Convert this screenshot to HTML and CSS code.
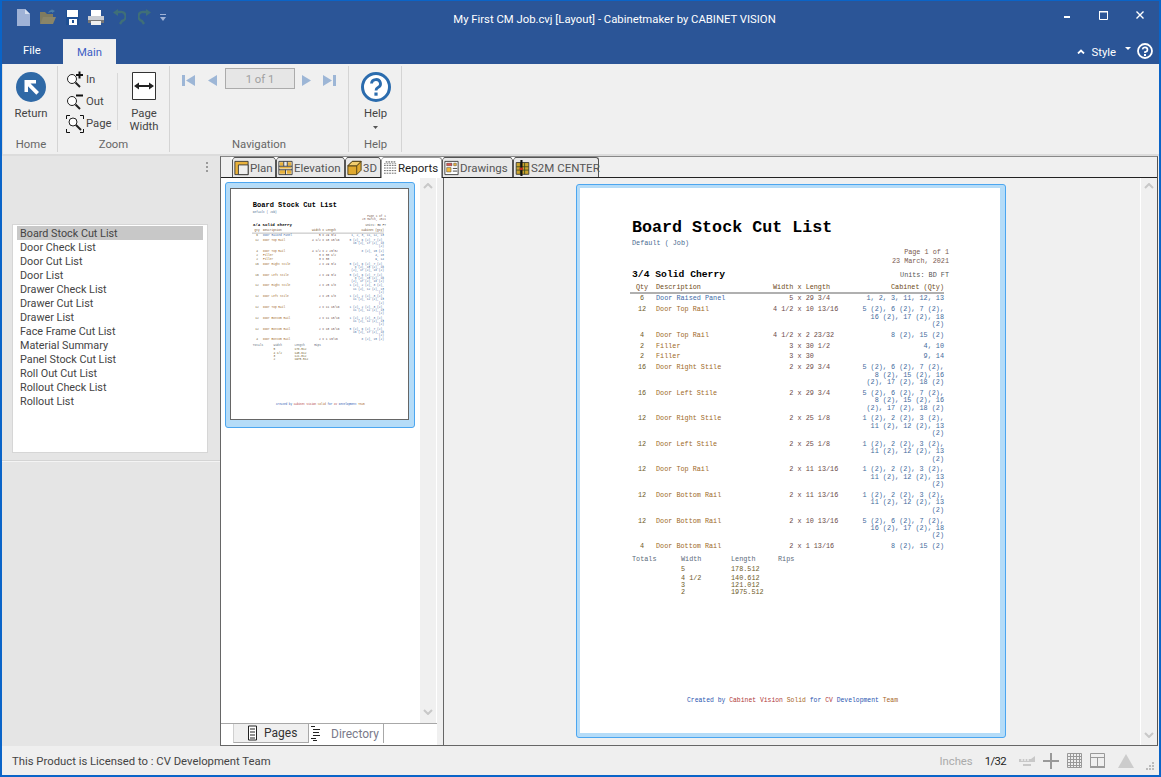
FILE: index.html
```html
<!DOCTYPE html>
<html lang="en">
<head>
<meta charset="utf-8">
<title>My First CM Job.cvj [Layout] - Cabinetmaker by CABINET VISION</title>
<link rel="stylesheet" href="styles.css">
</head>
<body>
<div class="window">
  <header class="titlebar">
    <div class="qat">
      <svg class="qi" width="13" height="17" viewBox="0 0 13 17"><path d="M0 0h8l5 5v12H0z" fill="#9fb2d6"/><path d="M8 0v5h5z" fill="#d5deee"/></svg>
      <svg class="qi" width="16" height="16" viewBox="0 0 16 16"><path d="M0 3h5l2 2h6v3H4l-4 7z" fill="#7f7b5f"/><path d="M3 8h13l-3 7H0z" fill="#8a8568"/><path d="M8 4c1-2 2-3 4-3l-1-1 4 2-3 2V3c-1 0-2 0-4 1z" fill="#4c7fa8"/></svg>
      <svg class="qi" width="13" height="15" viewBox="0 0 13 15"><path d="M0 0h13v15H0z" fill="#1e4f92"/><path d="M1 0h11v7H1z" fill="#fff"/><path d="M3 9h8v6H3z" fill="#fff"/><path d="M6 10h2v3H6z" fill="#1e4f92"/></svg>
      <svg class="qi" width="16" height="15" viewBox="0 0 16 15"><path d="M3 0h10v6H3z" fill="#fff"/><path d="M0 6h16v7H0z" fill="#c9ccd2"/><path d="M0 10h16v3H0z" fill="#777"/><path d="M3 11h10v4H3z" fill="#eee"/></svg>
      <svg class="qi" width="13" height="16" viewBox="0 0 13 16"><path d="M4 3h3a4.500 4.500 0 0 1 2 9l-2 3" fill="none" stroke="#3f6f78" stroke-width="2.400"/><path d="M5 0v7L0 3.500z" fill="#3f6f78"/></svg>
      <svg class="qi" width="13" height="16" viewBox="0 0 13 16"><path d="M9 3H6a4.500 4.500 0 0 0-2 9l2 3" fill="none" stroke="#3f6f78" stroke-width="2.400"/><path d="M8 0v7l5-3.500z" fill="#3f6f78"/></svg>
      <svg class="qi" width="6" height="7" viewBox="0 0 6 7"><path d="M0 0h6v1H0zM0 3h6L3 7z" fill="#9fb2d6"/></svg>
    </div>
    <h1 class="wintitle">My First CM Job.cvj [Layout] - Cabinetmaker by CABINET VISION</h1>
    <div class="winctl">
      <svg width="6" height="2" viewBox="0 0 6 2"><path d="M0 0h6v2H0z" fill="#fff"/></svg>
      <svg width="9" height="9" viewBox="0 0 9 9"><path d="M.5.500h8v8h-8z" fill="none" stroke="#fff"/><path d="M0 0h9v1.500H0z" fill="#fff"/></svg>
      <svg width="8" height="8" viewBox="0 0 8 8"><path d="M.5.500l7 7M7.500.500l-7 7" stroke="#fff" stroke-width="1.400"/></svg>
    </div>
  </header>

  <nav class="menubar">
    <span class="menu-file">File</span>
    <span class="menu-main">Main</span>
    <div class="style-area">
      <svg width="8" height="5" viewBox="0 0 8 5"><path d="M1 4.500L4 1.500l3 3" fill="none" stroke="#fff" stroke-width="1.800"/></svg>
      <span class="style-label">Style</span>
      <svg class="style-drop" width="6" height="3" viewBox="0 0 6 3"><path d="M0 0h6L3 3z" fill="#fff"/></svg>
      <svg width="16" height="16" viewBox="0 0 16 16"><circle cx="8" cy="8" r="7" fill="#2b5597" stroke="#fff" stroke-width="1.800"/><path d="M5.500 6.300A2.500 2.300 0 1 1 8 9v1" fill="none" stroke="#fff" stroke-width="1.700"/><path d="M7 11h2v2H7z" fill="#fff"/></svg>
    </div>
  </nav>

  <section class="ribbon">
    <div class="rgroup g-home">
      <div class="rbody">
        <button class="bigbtn">
          <svg width="30" height="30" viewBox="0 0 30 30"><circle cx="15" cy="15" r="15" fill="#2f69a6"/><path d="M9 8h11v3.500h-5.500L23 20l-2.700 2.700-8.300-8.400V20H8.500V8z" fill="#fff"/></svg>
          <span>Return</span>
        </button>
      </div>
      <div class="rlabel">Home</div>
    </div>
    <div class="rgroup g-zoom">
      <div class="rbody zoombody">
        <div class="zoomcol">
          <div class="smallbtn">
            <svg width="18" height="18" viewBox="0 0 18 18"><circle cx="6" cy="8" r="4.500" fill="#fff" stroke="#222"/><path d="M9.500 11.500l4.500 4.500" stroke="#222" stroke-width="2"/><path d="M10 4h7M13.500 .5v7" stroke="#111" stroke-width="2"/></svg>
            <span>In</span>
          </div>
          <div class="smallbtn">
            <svg width="18" height="18" viewBox="0 0 18 18"><circle cx="6" cy="8" r="4.500" fill="#fff" stroke="#222"/><path d="M9.500 11.500l4.500 4.500" stroke="#222" stroke-width="2"/><path d="M10 2.500h7" stroke="#111" stroke-width="2"/></svg>
            <span>Out</span>
          </div>
          <div class="smallbtn">
            <svg width="18" height="18" viewBox="0 0 18 18"><path d="M.5 4V.5H4M14 .5h3.500V4M17.500 14v3.500H14M4 17.500H.5V14" fill="none" stroke="#111"/><circle cx="7" cy="7" r="4" fill="#fff" stroke="#222"/><path d="M10 10l5 5" stroke="#222" stroke-width="2"/></svg>
            <span>Page</span>
          </div>
        </div>
        <div class="zoomsep"></div>
        <button class="pagewidth">
          <svg width="24" height="28" viewBox="0 0 24 28"><path d="M.5.500h23v27H.5z" fill="#fff" stroke="#333"/><path d="M5 14h14" stroke="#222" stroke-width="2"/><path d="M2 14l5-3.500v7zM22 14l-5-3.500v7z" fill="#222"/></svg>
          <span>Page<br>Width</span>
        </button>
      </div>
      <div class="rlabel">Zoom</div>
    </div>
    <div class="rgroup g-nav">
      <div class="rbody navbody">
        <svg width="13" height="11" viewBox="0 0 13 11"><path d="M0 0h3v11H0zM13 0v11L4 5.500z" fill="#9db6d6"/></svg>
        <svg class="nav-prev" width="9" height="11" viewBox="0 0 9 11"><path d="M9 0v11L0 5.500z" fill="#9db6d6"/></svg>
        <div class="pagebox">1 of 1</div>
        <svg class="nav-next" width="9" height="11" viewBox="0 0 9 11"><path d="M0 0v11l9-5.500z" fill="#9db6d6"/></svg>
        <svg class="nav-last" width="13" height="11" viewBox="0 0 13 11"><path d="M10 0h3v11h-3zM0 0v11l9-5.500z" fill="#9db6d6"/></svg>
      </div>
      <div class="rlabel">Navigation</div>
    </div>
    <div class="rgroup g-help">
      <div class="rbody">
        <button class="bigbtn">
          <svg width="30" height="30" viewBox="0 0 30 30"><circle cx="15" cy="15" r="13.500" fill="#fff" stroke="#2b6cae" stroke-width="3"/><path d="M10.500 11.500a4.500 4.200 0 1 1 6.500 4c-1.400.8-2 1.500-2 3" fill="none" stroke="#2b6cae" stroke-width="2.800"/><path d="M13.400 20.500h3.200v3.200h-3.200z" fill="#2b6cae"/></svg>
          <span>Help</span>
          <svg class="help-drop" width="5" height="3" viewBox="0 0 5 3"><path d="M0 0h5L2.500 3z" fill="#555"/></svg>
        </button>
      </div>
      <div class="rlabel">Help</div>
    </div>
  </section>

  <main class="workspace">
    <aside class="sidepanel">
      <div class="grip"><i></i><i></i><i></i></div>
      <ul class="reportlist">
        <li class="selected">Board Stock Cut List</li>
        <li>Door Check List</li>
        <li>Door Cut List</li>
        <li>Door List</li>
        <li>Drawer Check List</li>
        <li>Drawer Cut List</li>
        <li>Drawer List</li>
        <li>Face Frame Cut List</li>
        <li>Material Summary</li>
        <li>Panel Stock Cut List</li>
        <li>Roll Out Cut List</li>
        <li>Rollout Check List</li>
        <li>Rollout List</li>
      </ul>
      <div class="sidesep"></div>
    </aside>

    <div class="frame">
      <div class="tabs">
        <div class="tab t-plan"><svg width="17" height="17" viewBox="0 0 17 17"><path d="M1 1h15v15H1z" fill="#e9b23c" stroke="#333"/><path d="M5 5h11v11H5z" fill="#efefef" stroke="#333"/></svg>Plan</div>
        <div class="tab t-elev"><svg width="17" height="17" viewBox="0 0 17 17"><path d="M1 1h15v15H1z" fill="#efefef" stroke="#333"/><path d="M2 2h4v4H2zM11 2h4v4h-4zM2 7h13v2H2zM2 11h6v4H2zM10 11h5v4h-5z" fill="#e9b23c"/><path d="M1 6.500h15M1 10.500h15M8.500 10.500V16M6.500 1v5.500M10.500 1v5.500" stroke="#333" fill="none"/></svg>Elevation</div>
        <div class="tab t-3d"><svg width="17" height="17" viewBox="0 0 17 17"><path d="M1 6l5-5h10v10l-5 5H1z" fill="#e0a92f" stroke="#4a3b14"/><path d="M1 6h10v10M11 6l5-5" fill="none" stroke="#4a3b14"/><path d="M6 1h10l-5 5H1z" fill="#f2cd6e" stroke="#4a3b14"/></svg>3D</div>
        <div class="tab t-reports active"><svg width="15" height="17" viewBox="0 0 15 17"><path d="M2 1.500h11" stroke="#333" stroke-dasharray="2 1"/><path d="M0 5.500h15M0 8.500h15M0 11.500h15M0 14.500h15" stroke="#555" stroke-dasharray="2 1"/><path d="M0 3.500h15" stroke="#888" stroke-dasharray="2 1"/></svg>Reports</div>
        <div class="tab t-draw"><svg width="17" height="17" viewBox="0 0 17 17"><path d="M1 1h15v15H1z" fill="#fff" stroke="#333"/><path d="M3 3h6v3H3z" fill="#d9534f" stroke="#333" stroke-width=".5"/><path d="M11 3h3v3h-3z" fill="#f2b93b" stroke="#333" stroke-width=".5"/><path d="M3 8h5v5H3z" fill="#f2b93b" stroke="#333" stroke-width=".5"/><path d="M10 9h5M10 12h5" stroke="#333"/></svg>Drawings</div>
        <div class="tab t-s2m"><svg width="17" height="19" viewBox="0 0 17 19"><path d="M1 3h15v14H1z" fill="#c9a32e" stroke="#333"/><path d="M6 3v14M11 3v14M1 8h15M1 12h15" stroke="#3a4a20"/><path d="M6 0h2.500v19H6z" fill="#111"/><path d="M5 9h4v3H5z" fill="#c03020"/></svg>S2M CENTER</div>
      </div>

      <div class="panes">
        <div class="thumbpane">
          <div class="thumbarea">
            <div class="thumbscroll">
              <div class="thumbframe">
                <div class="thumbpage">
                  <article class="report">
                    <h2 class="rp-title">Board Stock Cut List</h2>
                    <div class="rp-sub">Default ( Job)</div>
                    <div class="rp-right">Page 1 of 1</div>
                    <div class="rp-right">23 March, 2021</div>
                    <div class="rp-mat"><b>3/4 Solid Cherry</b><span>Units: BD FT</span></div>
                    <div class="rp-row rp-head"><span class="q">Qty</span><span class="d">Description</span><span class="w">Width x Length</span><span class="c">Cabinet (Qty)</span></div>
                    <div class="rp-rule"></div>
                    <div class="rp-row"><span class="q">6</span><span class="d first">Door Raised Panel</span><span class="w">    5 x 29 3/4</span><span class="c">1, 2, 3, 11, 12, 13</span></div>
                    <div class="rp-row"><span class="q">12</span><span class="d">Door Top Rail</span><span class="w">4 1/2 x 10 13/16</span><span class="c">5 (2), 6 (2), 7 (2),<br>16 (2), 17 (2), 18<br>(2)</span></div>
                    <div class="rp-row"><span class="q">4</span><span class="d">Door Top Rail</span><span class="w">4 1/2 x 2 23/32</span><span class="c">8 (2), 15 (2)</span></div>
                    <div class="rp-row"><span class="q">2</span><span class="d">Filler</span><span class="w">    3 x 30 1/2</span><span class="c">4, 10</span></div>
                    <div class="rp-row"><span class="q">2</span><span class="d">Filler</span><span class="w">    3 x 30</span><span class="c">9, 14</span></div>
                    <div class="rp-row"><span class="q">16</span><span class="d">Door Right Stile</span><span class="w">    2 x 29 3/4</span><span class="c">5 (2), 6 (2), 7 (2),<br>8 (2), 15 (2), 16<br>(2), 17 (2), 18 (2)</span></div>
                    <div class="rp-row"><span class="q">16</span><span class="d">Door Left Stile</span><span class="w">    2 x 29 3/4</span><span class="c">5 (2), 6 (2), 7 (2),<br>8 (2), 15 (2), 16<br>(2), 17 (2), 18 (2)</span></div>
                    <div class="rp-row"><span class="q">12</span><span class="d">Door Right Stile</span><span class="w">    2 x 25 1/8</span><span class="c">1 (2), 2 (2), 3 (2),<br>11 (2), 12 (2), 13<br>(2)</span></div>
                    <div class="rp-row"><span class="q">12</span><span class="d">Door Left Stile</span><span class="w">    2 x 25 1/8</span><span class="c">1 (2), 2 (2), 3 (2),<br>11 (2), 12 (2), 13<br>(2)</span></div>
                    <div class="rp-row"><span class="q">12</span><span class="d">Door Top Rail</span><span class="w">    2 x 11 13/16</span><span class="c">1 (2), 2 (2), 3 (2),<br>11 (2), 12 (2), 13<br>(2)</span></div>
                    <div class="rp-row"><span class="q">12</span><span class="d">Door Bottom Rail</span><span class="w">    2 x 11 13/16</span><span class="c">1 (2), 2 (2), 3 (2),<br>11 (2), 12 (2), 13<br>(2)</span></div>
                    <div class="rp-row"><span class="q">12</span><span class="d">Door Bottom Rail</span><span class="w">    2 x 10 13/16</span><span class="c">5 (2), 6 (2), 7 (2),<br>16 (2), 17 (2), 18<br>(2)</span></div>
                    <div class="rp-row"><span class="q">4</span><span class="d">Door Bottom Rail</span><span class="w">    2 x 1 13/16</span><span class="c">8 (2), 15 (2)</span></div>
                    <div class="rp-totals rp-totalhead"><span>Totals</span><span>Width</span><span>Length</span><span>Rips</span></div>
                    <div class="rp-totals tfirst"><span></span><span>5</span><span>178.512</span></div>
                    <div class="rp-totals tgap"><span></span><span>4 1/2</span><span>140.612</span></div>
                    <div class="rp-totals"><span></span><span>3</span><span>121.012</span></div>
                    <div class="rp-totals"><span></span><span>2</span><span>1975.512</span></div>
                    <div class="rp-foot"><span class="fb">Created by</span> <span class="fr">Cabinet Vision</span> <span class="fo">Solid</span> <span class="fb">for</span> <span class="fr">CV</span> <span class="fb">Development</span> <span class="fo">Team</span></div>
                  </article>
                </div>
              </div>
            </div>
            <div class="vscroll thumbbar">
              <svg width="10" height="6" viewBox="0 0 10 6"><path d="M1 5l4-4 4 4" fill="none" stroke="#c8c8c8" stroke-width="2"/></svg>
              <svg width="10" height="6" viewBox="0 0 10 6"><path d="M1 1l4 4 4-4" fill="none" stroke="#c8c8c8" stroke-width="2"/></svg>
            </div>
            <div class="thumbstrip"></div>
          </div>
          <div class="pagetabs">
            <div class="ptab ptab-on"><svg width="9" height="17" viewBox="0 0 9 17"><path d="M.5 1h8v14h-8z" fill="#fff" stroke="#222"/><path d="M2 4h5M2 7h5M2 10h5M2 13h5" stroke="#222"/></svg>Pages</div>
            <div class="ptab ptab-off"><svg width="9" height="17" viewBox="0 0 9 17"><path d="M0 1.500h4M2 4.500h7M2 7.500h6M2 10.500h7M0 13.500h5M2 15.500h4" stroke="#222"/></svg>Directory</div>
          </div>
        </div>

        <div class="viewpane">
          <div class="viewarea">
            <div class="pageframe">
              <article class="report">
                <h2 class="rp-title">Board Stock Cut List</h2>
                <div class="rp-sub">Default ( Job)</div>
                <div class="rp-right">Page 1 of 1</div>
                <div class="rp-right">23 March, 2021</div>
                <div class="rp-mat"><b>3/4 Solid Cherry</b><span>Units: BD FT</span></div>
                <div class="rp-row rp-head"><span class="q">Qty</span><span class="d">Description</span><span class="w">Width x Length</span><span class="c">Cabinet (Qty)</span></div>
                <div class="rp-rule"></div>
                <div class="rp-row"><span class="q">6</span><span class="d first">Door Raised Panel</span><span class="w">    5 x 29 3/4</span><span class="c">1, 2, 3, 11, 12, 13</span></div>
                <div class="rp-row"><span class="q">12</span><span class="d">Door Top Rail</span><span class="w">4 1/2 x 10 13/16</span><span class="c">5 (2), 6 (2), 7 (2),<br>16 (2), 17 (2), 18<br>(2)</span></div>
                <div class="rp-row"><span class="q">4</span><span class="d">Door Top Rail</span><span class="w">4 1/2 x 2 23/32</span><span class="c">8 (2), 15 (2)</span></div>
                <div class="rp-row"><span class="q">2</span><span class="d">Filler</span><span class="w">    3 x 30 1/2</span><span class="c">4, 10</span></div>
                <div class="rp-row"><span class="q">2</span><span class="d">Filler</span><span class="w">    3 x 30</span><span class="c">9, 14</span></div>
                <div class="rp-row"><span class="q">16</span><span class="d">Door Right Stile</span><span class="w">    2 x 29 3/4</span><span class="c">5 (2), 6 (2), 7 (2),<br>8 (2), 15 (2), 16<br>(2), 17 (2), 18 (2)</span></div>
                <div class="rp-row"><span class="q">16</span><span class="d">Door Left Stile</span><span class="w">    2 x 29 3/4</span><span class="c">5 (2), 6 (2), 7 (2),<br>8 (2), 15 (2), 16<br>(2), 17 (2), 18 (2)</span></div>
                <div class="rp-row"><span class="q">12</span><span class="d">Door Right Stile</span><span class="w">    2 x 25 1/8</span><span class="c">1 (2), 2 (2), 3 (2),<br>11 (2), 12 (2), 13<br>(2)</span></div>
                <div class="rp-row"><span class="q">12</span><span class="d">Door Left Stile</span><span class="w">    2 x 25 1/8</span><span class="c">1 (2), 2 (2), 3 (2),<br>11 (2), 12 (2), 13<br>(2)</span></div>
                <div class="rp-row"><span class="q">12</span><span class="d">Door Top Rail</span><span class="w">    2 x 11 13/16</span><span class="c">1 (2), 2 (2), 3 (2),<br>11 (2), 12 (2), 13<br>(2)</span></div>
                <div class="rp-row"><span class="q">12</span><span class="d">Door Bottom Rail</span><span class="w">    2 x 11 13/16</span><span class="c">1 (2), 2 (2), 3 (2),<br>11 (2), 12 (2), 13<br>(2)</span></div>
                <div class="rp-row"><span class="q">12</span><span class="d">Door Bottom Rail</span><span class="w">    2 x 10 13/16</span><span class="c">5 (2), 6 (2), 7 (2),<br>16 (2), 17 (2), 18<br>(2)</span></div>
                <div class="rp-row"><span class="q">4</span><span class="d">Door Bottom Rail</span><span class="w">    2 x 1 13/16</span><span class="c">8 (2), 15 (2)</span></div>
                <div class="rp-totals rp-totalhead"><span>Totals</span><span>Width</span><span>Length</span><span>Rips</span></div>
                <div class="rp-totals tfirst"><span></span><span>5</span><span>178.512</span></div>
                <div class="rp-totals tgap"><span></span><span>4 1/2</span><span>140.612</span></div>
                <div class="rp-totals"><span></span><span>3</span><span>121.012</span></div>
                <div class="rp-totals"><span></span><span>2</span><span>1975.512</span></div>
                <div class="rp-foot"><span class="fb">Created by</span> <span class="fr">Cabinet Vision</span> <span class="fo">Solid</span> <span class="fb">for</span> <span class="fr">CV</span> <span class="fb">Development</span> <span class="fo">Team</span></div>
              </article>
            </div>
          </div>
          <div class="vscroll viewbar">
            <svg width="10" height="6" viewBox="0 0 10 6"><path d="M1 5l4-4 4 4" fill="none" stroke="#c8c8c8" stroke-width="2"/></svg>
            <svg width="10" height="6" viewBox="0 0 10 6"><path d="M1 1l4 4 4-4" fill="none" stroke="#c8c8c8" stroke-width="2"/></svg>
          </div>
        </div>
      </div>
    </div>
  </main>

  <footer class="statusbar">
    <span class="license">This Product is Licensed to : CV Development Team</span>
    <span class="units">Inches</span>
    <span class="fraction">1/32</span>
    <svg class="st-ruler" width="16" height="10" viewBox="0 0 16 10"><path d="M0 3h12l4-3v6H0zM4 8h8v2H4z" fill="#c8c8c8"/><path d="M3 3v2M6 3v2M9 3v2" stroke="#fff"/></svg>
    <svg width="16" height="16" viewBox="0 0 16 16"><path d="M0 7h16v2H0zM7 0h2v16H7z" fill="#999"/></svg>
    <svg width="15" height="15" viewBox="0 0 15 15"><path d="M.5.500h14v14H.5zM3.500.500v14M6.500.500v14M9.500.500v14M12.500.500v14M.5 3.500h14M.5 6.500h14M.5 9.500h14M.5 12.500h14" fill="none" stroke="#999"/></svg>
    <svg width="15" height="15" viewBox="0 0 15 15"><path d="M.5.500h14v14H.5zM.5 4.500h14M7.500 4.500v10" fill="none" stroke="#999"/><path d="M0 13h15v2H0z" fill="#999"/></svg>
    <svg class="st-tri" width="16" height="14" viewBox="0 0 16 14"><path d="M8 0l8 14H0z" fill="#ccc"/></svg>
    <svg class="st-grip" width="8" height="8" viewBox="0 0 8 8"><path d="M6 0h2v2H6zM3 3h2v2H3zM6 3h2v2H6zM0 6h2v2H0zM3 6h2v2H3zM6 6h2v2H6z" fill="#bbb"/></svg>
  </footer>
</div>
</body>
</html>
```

FILE: styles.css
```css
* { box-sizing: border-box; }
html, body { margin: 0; padding: 0; }
body {
  width: 1161px;
  height: 777px;
  overflow: hidden;
  font-family: Roboto, "Noto Sans", sans-serif;
  font-size: 11.300px;
  color: #444;
  background: #f0f0f0;
}
button { font: inherit; color: inherit; background: none; border: 0; padding: 0; }
svg { display: block; flex: none; }

.window {
  height: 777px;
  display: flex;
  flex-direction: column;
  border-top: 1px solid #0a64c8;
  border-left: 2px solid #0a64c8;
  border-right: 2px solid #0a64c8;
  border-bottom: 2px solid #0a64c8;
}

/* Title bar */
.titlebar {
  height: 37px;
  flex: none;
  background: #2b5597;
  display: flex;
  align-items: flex-start;
  position: relative;
  padding: 7px 0 0 15px;
}
.qat { display: flex; align-items: center; gap: 10px; height: 18px; }
.qat .qi:nth-child(4),
.qat .qi:nth-child(5),
.qat .qi:nth-child(7) { margin-left: -1px; }
.qat .qi:nth-child(6) { margin-left: 2px; }
.wintitle {
  position: absolute;
  left: 68px;
  right: 0;
  top: 11px;
  margin: 0;
  text-align: center;
  font-size: 11.300px;
  line-height: 16px;
  font-weight: 400;
  color: #fff;
}
.winctl {
  margin-left: auto;
  display: flex;
  align-items: center;
  height: 14px;
  gap: 28px;
  padding-right: 15px;
}
.winctl svg:first-child { margin: 4px 1px 0 0; }

/* Tabs row */
.menubar {
  height: 26px;
  flex: none;
  background: #2b5597;
  display: flex;
  align-items: flex-end;
  padding-left: 21px;
  color: #fff;
}
.menu-file { width: 40px; line-height: 26px; }
.menu-main {
  width: 53px;
  height: 25px;
  line-height: 26px;
  text-align: center;
  background: #f0f0f0;
  color: #3d5fc4;
  border-top: 1px solid #e4e8ee;
}
.style-area {
  margin-left: auto;
  padding-right: 6px;
  display: flex;
  align-items: center;
  height: 26px;
}
.style-label { margin: 0 9px 0 7px; padding-top: 2px; color: #fff; }
.style-drop { margin: -6px 6px 0 0; }

/* Ribbon */
.ribbon {
  height: 92px;
  flex: none;
  display: flex;
  background: #f0f0f0;
  border-bottom: 2px solid #dcdcdc;
  border-left: 1px solid #dcdcdc;
  padding-top: 2px;
}
.rgroup {
  display: flex;
  flex-direction: column;
  border-right: 1px solid #d4d4d4;
  height: 86px;
}
.rbody { flex: 1; min-height: 0; }
.rlabel { height: 17px; line-height: 19px; text-align: center; color: #666; }
.g-home { width: 55px; padding-left: 2px; }
.g-zoom { width: 112px; }
.g-nav { width: 179px; }
.g-help { width: 53px; padding-left: 1px; }
.bigbtn {
  width: 100%;
  display: flex;
  flex-direction: column;
  align-items: center;
  line-height: 16px;
  padding-top: 6px;
  color: #444;
}
.bigbtn span { margin-top: 4px; }
.help-drop { margin-top: 4px; }

.zoombody { display: flex; padding: 5px 0 0 8px; }
.zoomcol { width: 50px; display: flex; flex-direction: column; gap: 4px; }
.smallbtn { display: flex; align-items: center; gap: 2px; height: 18px; line-height: 14px; }
.smallbtn span { margin-top: -1px; }
.zoomsep { width: 1px; height: 57px; margin: 2px 0 0 1px; background: #d8d8d8; }
.pagewidth {
  margin-left: 13px;
  width: 26px;
  display: flex;
  flex-direction: column;
  align-items: center;
  line-height: 13px;
  padding-top: 1px;
  overflow: visible;
}
.pagewidth span { margin-top: 7px; }

.navbody { display: flex; align-items: flex-start; padding: 2px 0 0 12px; }
.navbody > svg { margin-top: 7px; }
.nav-prev { margin-left: 13px; }
.pagebox {
  width: 70px;
  height: 21px;
  margin-left: 8px;
  line-height: 21px;
  text-align: center;
  background: #e6e6e6;
  border: 1px solid #ababab;
  color: #a0a0a0;
}
.nav-next { margin-left: 7px; }
.nav-last { margin-left: 12px; }

/* Workspace */
.workspace { flex: 1; min-height: 0; display: flex; background: #f0f0f0; }
.sidepanel {
  width: 218px;
  flex: none;
  background: #e5e5e5;
  padding: 68px 0 0 10px;
  position: relative;
}
.grip { position: absolute; left: 204px; top: 6px; display: flex; flex-direction: column; gap: 2px; }
.grip i { display: block; width: 2px; height: 2px; background: #9a9a9a; }
.reportlist {
  list-style: none;
  margin: 0;
  padding: 1px 4px;
  width: 196px;
  height: 229px;
  background: #fff;
  border: 1px solid #d6d6d6;
  color: #444;
  font-size: 10.800px;
}
.reportlist li { height: 14px; line-height: 16px; padding-left: 3px; white-space: nowrap; }
.reportlist .selected { background: #c8c8c8; }
.sidesep {
  height: 2px;
  margin: 7px 0 0 -10px;
  border-top: 1px solid #d4d4d4;
  border-bottom: 1px solid #f4f4f4;
}

.frame {
  flex: 1;
  min-width: 0;
  margin-right: 1px;
  display: flex;
  flex-direction: column;
  border: 1px solid #666;
  border-right-color: #555;
  border-top-color: #888;
}
.tabs {
  height: 21px;
  flex: none;
  display: flex;
  padding-left: 11px;
  border-bottom: 1px solid #222;
  background: #f0f0f0;
}
.tab {
  position: relative;
  height: 20px;
  display: flex;
  align-items: center;
  gap: 1px;
  padding: 0 0 0 1px;
  background: #e9e9e9;
  border: 1px solid #555;
  border-bottom: 0;
  border-radius: 3px 3px 0 0;
  color: #555;
  font-size: 11.500px;
  white-space: nowrap;
}
.tab::before {
  content: "";
  position: absolute;
  left: -3px;
  top: -1px;
  border-left: 2px solid transparent;
  border-right: 2px solid transparent;
  border-top: 3px solid #fff;
}
.tab svg { width: 15px; height: 16px; }
.tab.active { background: #fff; height: 21px; color: #222; border-color: #999; z-index: 1; padding-left: 2px; }
.tab.active svg { width: 13px; }
.t-plan { width: 44px; }
.t-elev { width: 69px; }
.t-3d { width: 36px; }
.t-reports { width: 61px; }
.t-draw { width: 71px; }
.t-s2m { width: 86px; }

.panes { flex: 1; min-height: 0; display: flex; }
.thumbpane {
  width: 223px;
  flex: none;
  display: flex;
  flex-direction: column;
  background: #f0f0f0;
  border-right: 1px solid #666;
}
.thumbarea { flex: 1; min-height: 0; display: flex; }
.thumbscroll { width: 199px; padding: 4px 0 0 4px; background: #fff; }
.thumbframe {
  width: 190px;
  height: 246px;
  padding: 5px 4px 6px 4px;
  background: #b5dcf8;
  border: 1.500px solid #4ca6f0;
  border-radius: 3px;
}
.thumbpage {
  width: 179px;
  height: 232px;
  background: #fff;
  border: 1px solid #666;
  overflow: hidden;
}
.thumbpage .report { transform: scale(.42); transform-origin: 0 0; }
.vscroll {
  display: flex;
  flex-direction: column;
  justify-content: space-between;
  align-items: center;
  background: #f0f0f0;
}
.thumbbar { width: 16px; padding: 5px 0 8px; }
.thumbstrip { flex: 1; background: #f0f0f0; border-left: 1px solid #fff; }
.pagetabs {
  height: 22px;
  flex: none;
  display: flex;
  margin-right: 6px;
  padding-left: 12px;
  border-top: 1px solid #a8a8a8;
  background: #fff;
}
.ptab { height: 19px; display: flex; align-items: center; font-size: 12px; }
.ptab-on { width: 76px; background: #f0f0f0; border-bottom: 1px solid #a8a8a8; border-right: 1px solid #a8a8a8; border-left: 1px solid #d0d0d0; padding-left: 14px; gap: 7px; color: #333; }
.ptab-off { width: 75px; padding-left: 2px; gap: 11px; border-right: 1px solid #a8a8a8; color: #7a7a8a; }

.viewpane { flex: 1; min-width: 0; display: flex; background: #f0f0f0; }
.viewarea { flex: 1; min-width: 0; padding: 6px 0 0 132px; }
.pageframe {
  width: 430px;
  height: 554px;
  padding: 3px 4px 4px 3px;
  background: #b5dcf8;
  border: 1.500px solid #4ca6f0;
  border-radius: 3px;
}
.viewbar { width: 17px; padding: 5px 0 7px; border-left: 1px solid #fff; }

/* Report document */
.report {
  width: 420px;
  height: 545px;
  padding: 30px 56px 28px 52px;
  background: #fff;
  display: flex;
  flex-direction: column;
  font-family: "Liberation Mono", monospace;
  font-size: 6.800px;
  line-height: 8px;
  color: #666;
  flex: none;
}
.rp-title { margin: 0; height: 20px; font-size: 16.700px; line-height: 20px; font-weight: 700; color: #000; }
.rp-sub { height: 8px; margin-top: 1px; color: #4a6a90; }
.rp-right { height: 8px; margin-top: 1px; margin-right: -5px; text-align: right; color: #7a5a50; }
.rp-mat { display: flex; justify-content: space-between; align-items: center; height: 12px; margin-top: 4px; margin-right: -5px; color: #555; }
.rp-mat b { font-size: 9.700px; color: #000; }
.rp-row {
  display: grid;
  grid-template-columns: 20px 121px 89px 82px;
  margin-right: -4px;
  line-height: 7.330px;
  padding-bottom: 3.560px;
}
.rp-row .q { text-align: center; color: #6e5a28; }
.rp-row .d { margin-left: 4px; color: #a06a28; }
.rp-row .d.first { color: #3d6aa8; }
.rp-row .w { white-space: pre; color: #6b4a48; }
.rp-row .c { text-align: right; color: #3f6a9c; }
.rp-head { margin-top: 2px; line-height: 8px; padding-bottom: 0; height: 8px; }
.rp-head .q, .rp-head .w, .rp-head .d, .rp-head .c { color: #6e4a20; }
.rp-rule { height: 2px; margin: 1px 0 1.300px -2px; background: #b0b0b0; }
.rp-totals { display: grid; grid-template-columns: 49px 50px 47px 30px; line-height: 7px; height: 7px; color: #6e5a28; }
.rp-totalhead { margin-top: 1px; height: 8px; line-height: 8px; color: #5a6a7a; }
.tfirst { margin-top: 3.500px; }
.tgap { margin-top: 2px; }
.rp-foot { margin-top: auto; margin-left: 55px; white-space: nowrap; font-size: 6.400px; line-height: 8px; }
.fb { color: #2a55b0; }
.fr { color: #b03a3a; }
.fo { color: #a8661e; }

/* Status bar */
.statusbar {
  height: 29px;
  flex: none;
  display: flex;
  align-items: center;
  background: #efefef;
  padding-left: 10px;
}
.license { color: #444; padding-top: 2px; }
.units { margin-left: auto; padding-top: 2px; color: #aaa; }
.fraction { margin-left: 12px; margin-right: 13px; padding-top: 2px; letter-spacing: -.6px; color: #222; }
.statusbar svg + svg { margin-left: 8px; }
.statusbar .st-tri { margin-left: 13px; }
.statusbar .st-grip { margin: 10px 5px 0 12px; }
```
